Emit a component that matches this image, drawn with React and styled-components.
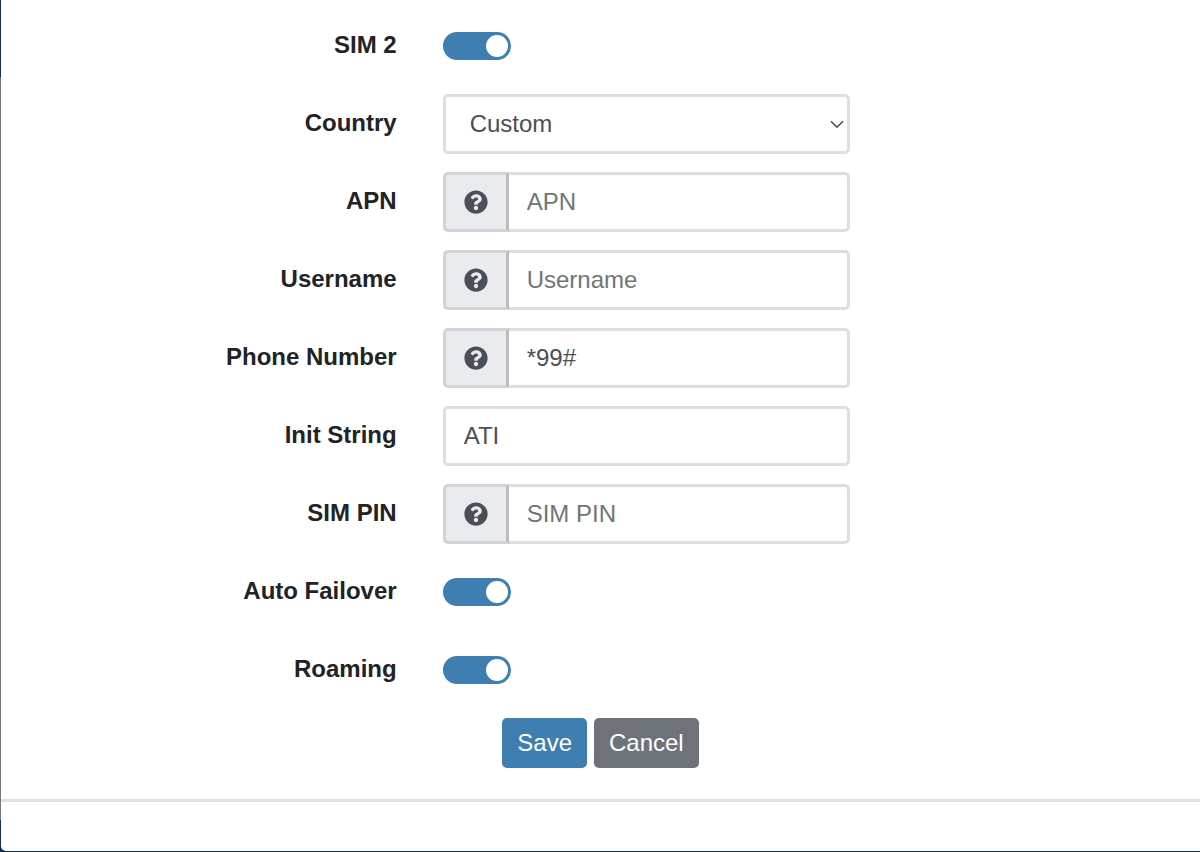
import React, { useState } from "react";
import styled, { createGlobalStyle } from "styled-components";
import { FaQuestionCircle } from "react-icons/fa";

const GlobalStyle = createGlobalStyle`
  * {
    box-sizing: border-box;
  }
  body {
    margin: 0;
    font-family: "Liberation Sans", Arial, sans-serif;
    font-size: 24px;
    line-height: 36px;
    color: #212326;
  }
`;

const Backdrop = styled.div`
  min-height: 100vh;
  display: flex;
  padding: 0 0 1px 1px;
  background: linear-gradient(
    #14304f 77px,
    #77797d 77px,
    #77797d calc(100% - 32px),
    #14304f calc(100% - 32px)
  );
`;

const Modal = styled.main`
  flex: 1;
  display: flex;
  flex-direction: column;
  background: #fff;
  border-bottom-left-radius: 5px;
`;

const Form = styled.form`
  flex: 1;
  display: flex;
  flex-direction: column;
  gap: 18px;
  padding: 16px 0 30px;
`;

const Row = styled.div`
  display: grid;
  grid-template-columns: 33% 34%;
  column-gap: 46px;
  align-items: center;
  min-height: 60px;
`;

const Label = styled.label`
  padding-bottom: 3px;
  font-weight: 700;
  text-align: right;
`;

const SwitchInput = styled.input`
  appearance: none;
  display: flex;
  align-items: center;
  justify-content: flex-end;
  width: 68px;
  height: 28px;
  margin: 0;
  padding: 0 3px;
  border-radius: 14px;
  background: #adb5bd;
  cursor: pointer;

  &::before {
    content: "";
    width: 22px;
    height: 22px;
    border-radius: 50%;
    background: #fff;
  }

  &:not(:checked) {
    justify-content: flex-start;
  }

  &:checked {
    background: #3e7eb1;
  }
`;

const InputGroup = styled.div`
  display: flex;
`;

const Addon = styled.span`
  display: flex;
  flex: none;
  align-items: center;
  justify-content: center;
  width: 66px;
  color: #495057;
  background: #e9ebee;
  border: 3px solid #d3d4d7;
  border-right-color: #babcbf;
  border-radius: 5px 0 0 5px;
`;

const TextInput = styled.input`
  flex: 1;
  min-width: 0;
  height: 60px;
  padding: 8px 18px;
  color: #495057;
  font: inherit;
  background: #fff;
  border: 3px solid #dddee0;
  border-left-width: ${({ $grouped }) => ($grouped ? "0" : "3px")};
  border-radius: ${({ $grouped }) => ($grouped ? "0 5px 5px 0" : "5px")};

  &::placeholder {
    color: #6f7678;
    opacity: 1;
  }
`;

const SelectWrap = styled.div`
  position: relative;
  display: flex;
`;

const Select = styled.select`
  appearance: none;
  flex: 1;
  min-width: 0;
  height: 60px;
  padding: 8px 36px 8px 24px;
  color: #495057;
  font: inherit;
  background: #fff;
  border: 3px solid #dddee0;
  border-radius: 5px;
`;

const Chevron = styled.svg`
  position: absolute;
  top: 26px;
  right: 6px;
  width: 14px;
  height: 9px;
  pointer-events: none;
`;

const Actions = styled.div`
  display: flex;
  justify-content: center;
  gap: 7px;
`;

const Button = styled.button`
  height: 50px;
  padding: 0 15px;
  color: #fff;
  font: inherit;
  background: ${({ $primary }) => ($primary ? "#3e7eb1" : "#6d7379")};
  border: 0;
  border-radius: 5px;
  cursor: pointer;
`;

const Footer = styled.footer`
  height: 52px;
  border-top: 3px solid #dfe0e2;
`;

const SwitchRow = ({ id, label }) => {
  const [on, setOn] = useState(true);
  return (
    <Row>
      <Label htmlFor={id}>{label}</Label>
      <SwitchInput
        id={id}
        type="checkbox"
        role="switch"
        checked={on}
        onChange={() => setOn(!on)}
      />
    </Row>
  );
};

const TextRow = ({ id, label, help, ...input }) => (
  <Row>
    <Label htmlFor={id}>{label}</Label>
    <InputGroup>
      {help && (
        <Addon>
          <FaQuestionCircle size={24} aria-hidden="true" />
        </Addon>
      )}
      <TextInput id={id} type="text" $grouped={help} {...input} />
    </InputGroup>
  </Row>
);

const App = () => {
  return (
    <>
      <GlobalStyle />
      <Backdrop>
        <Modal>
          <Form onSubmit={(e) => e.preventDefault()}>
            <SwitchRow id="sim2" label="SIM 2" />
            <Row>
              <Label htmlFor="country">Country</Label>
              <SelectWrap>
                <Select id="country" defaultValue="custom">
                  <option value="custom">Custom</option>
                </Select>
                <Chevron viewBox="0 0 14 9" aria-hidden="true">
                  <path
                    d="M1 1.2 7 7.2 13 1.2"
                    fill="none"
                    stroke="#45484c"
                    strokeWidth="1.5"
                  />
                </Chevron>
              </SelectWrap>
            </Row>
            <TextRow id="apn" label="APN" placeholder="APN" help />
            <TextRow id="username" label="Username" placeholder="Username" help />
            <TextRow id="phone" label="Phone Number" defaultValue="*99#" help />
            <TextRow id="init" label="Init String" defaultValue="ATI" />
            <TextRow id="pin" label="SIM PIN" placeholder="SIM PIN" help />
            <SwitchRow id="failover" label="Auto Failover" />
            <SwitchRow id="roaming" label="Roaming" />
            <Actions>
              <Button type="submit" $primary>
                Save
              </Button>
              <Button type="button">Cancel</Button>
            </Actions>
          </Form>
          <Footer />
        </Modal>
      </Backdrop>
    </>
  );
};

export default App;
